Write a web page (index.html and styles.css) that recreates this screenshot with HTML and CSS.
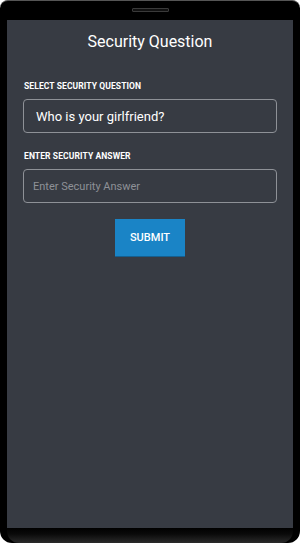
FILE: index.html
```html
<!DOCTYPE html>
<html>
<head>
<meta charset="utf-8">
<link rel="stylesheet" href="styles.css">
</head>
<body>
<div class="phone">
  <div class="speaker"></div>
  <div class="screen">
    <h1 class="title">Security Question</h1>
    <div class="form">
      <label class="label">SELECT SECURITY QUESTION</label>
      <div class="field field-select">Who is your girlfriend?</div>
      <label class="label">ENTER SECURITY ANSWER</label>
      <div class="field field-input">Enter Security Answer</div>
      <div class="actions"><button class="submit">SUBMIT</button></div>
    </div>
  </div>
  <div class="chin"></div>
</div>
</body>
</html>
```
FILE: styles.css
```css
html, body { margin: 0; padding: 0; background: #fff; }
body { font-family: Roboto, "Noto Sans", sans-serif; width: 300px; height: 545px; overflow: hidden; }
.phone {
  width: 300px;
  height: 543px;
  background: #000;
  border-radius: 8px 8px 12px 12px;
  box-sizing: border-box;
  padding: 19px 7px 0 7px;
  position: relative;
  border-top: 1px solid #555;
  display: flex;
  flex-direction: column;
}
.speaker {
  position: absolute;
  left: 132px;
  top: 7px;
  width: 35px;
  height: 2px;
  border: 1px solid #3a3a3a;
  background: #111;
  border-radius: 1px;
}
.screen {
  background: #373b43;
  height: 508px;
  display: flex;
  flex-direction: column;
}
.chin {
  flex: 1;
  background: linear-gradient(#000 0%, #0a0a0a 40%, #2a2a2a 100%);
  border-radius: 0 0 12px 12px;
}
.title {
  margin: 13px 0 0 0;
  text-align: center;
  color: #fff;
  font-weight: 400;
  font-size: 16px;
  line-height: 18px;
}
.form { padding: 0 16px; display: flex; flex-direction: column; margin-top: 30px; }
.label {
  color: #fff;
  font-weight: 700;
  font-size: 8.5px;
  line-height: 10px;
  letter-spacing: 0.1px;
  margin-left: 1px;
}
.field {
  margin-top: 8px;
  height: 34px;
  box-sizing: border-box;
  border: 1px solid #8e9197;
  border-radius: 4px;
  display: flex;
  align-items: center;
}
.field-select { color: #fff; font-size: 13px; padding-left: 12px; margin-bottom: 18px; }
.field-input { color: #8e9197; font-size: 11px; padding-left: 9px; margin-top: 8px; }
.actions { display: flex; justify-content: center; margin-top: 16px; }
.submit {
  width: 70px;
  height: 38px;
  border: none;
  border-bottom: 1px solid #155f8f;
  background: #1a84c6;
  color: #fff;
  font-family: Roboto, sans-serif;
  font-size: 11px;
  font-weight: 500;
  padding: 0;
}
```
